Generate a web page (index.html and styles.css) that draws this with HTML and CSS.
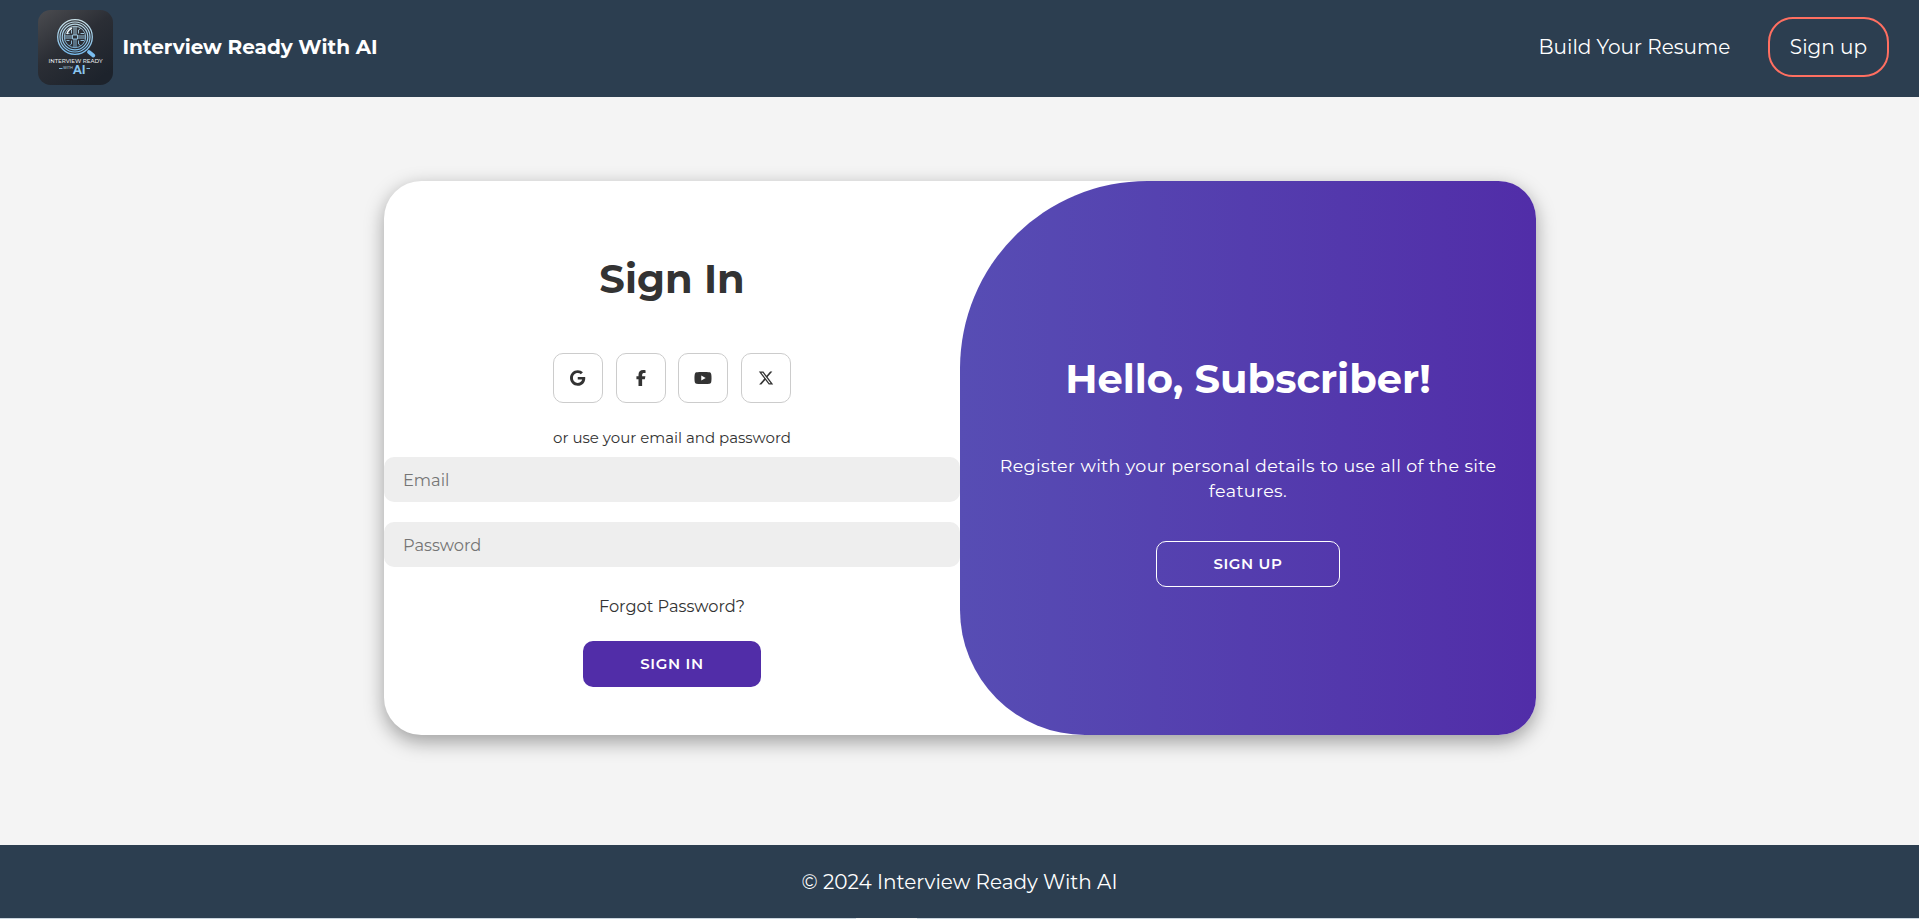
FILE: index.html
```html
<!DOCTYPE html>
<html lang="en">
<head>
<meta charset="utf-8">
<title>Interview Ready With AI</title>
<link rel="stylesheet" href="styles.css">
</head>
<body>
<header class="header">
  <div class="brand">
    <svg class="logo" viewBox="0 0 75 75" role="img" aria-label="Interview Ready With AI">
      <defs>
        <linearGradient id="tile" x1="0" y1="0" x2="0.7" y2="1"><stop offset="0" stop-color="#4b4c50"/><stop offset="0.5" stop-color="#2b2e35"/><stop offset="1" stop-color="#1d232c"/></linearGradient>
        <linearGradient id="ring" gradientUnits="userSpaceOnUse" x1="0" y1="9" x2="0" y2="45"><stop offset="0" stop-color="#c9e0e6"/><stop offset="1" stop-color="#74b8ea"/></linearGradient>
      </defs>
      <rect width="75" height="75" rx="12.500" fill="url(#tile)"/>
      <g fill="none" stroke="url(#ring)">
        <circle cx="37" cy="27" r="17.300" stroke-width="1.300"/>
        <circle cx="37" cy="27" r="15" stroke-width="1.200"/>
        <circle cx="37" cy="27" r="12.800" stroke-width="1.200"/>
        <circle cx="37" cy="27" r="10.700" stroke-width="0.900"/>
        <path stroke-width="0.900" d="M34.500 25h5v4h-5zM36 25V17M38 25V17M36 29V37M38 29V37M34.500 26H27M34.500 28H27M39.500 26H47M39.500 28H47M33.500 23.500V20l-2-1.500M40.500 23.500V20l2-1.500M33.500 30.500V34l-2 1.500M40.500 30.500V34l2 1.500M31.500 23.500h-3M42.500 23.500h3.500M31.500 30.500h-3M42.500 30.500h3.500"/>
      </g>
      <path d="M29 24a9 9 0 0 1 5-6" fill="none" stroke="#eef6f8" stroke-width="1.400"/>
      <path d="M51 42l4.300 3.500" stroke="#79bdf0" stroke-width="3.800" stroke-linecap="round"/>
      <g class="logo-text" text-anchor="middle">
        <text x="37.500" y="52.800" font-size="6.200" font-weight="500" fill="#e8ecee" textLength="54" lengthAdjust="spacingAndGlyphs">INTERVIEW READY</text>
        <text x="30" y="59.300" font-size="4" font-weight="500" fill="#b5ccd9" textLength="10" lengthAdjust="spacingAndGlyphs">WITH</text>
        <text x="41.200" y="63.700" font-size="12" font-weight="700" fill="#8ac5ee" textLength="12.500" lengthAdjust="spacingAndGlyphs">AI</text>
      </g>
      <path d="M21 58.500h3.500M48.500 58.500h3.500" stroke="#79b4dc" stroke-width="1.100"/>
    </svg>
    <span class="brand-name">Interview Ready With AI</span>
  </div>
  <nav class="nav">
    <a class="nav-link">Build Your Resume</a>
    <a class="nav-link nav-signup">Sign up</a>
  </nav>
</header>

<main class="main">
  <section class="card">
    <form class="form">
      <h1 class="title">Sign In</h1>
      <div class="social">
        <a class="social-icon"><svg width="15.250" height="16" viewBox="0 0 488 512"><path d="M488 261.800C488 403.300 391.100 504 248 504 110.800 504 0 393.200 0 256S110.800 8 248 8c66.800 0 123 24.500 166.300 64.900l-67.500 64.900C258.500 52.600 94.300 116.600 94.300 256c0 86.500 69.100 156.600 153.700 156.600 98.200 0 135-70.400 140.800-106.900H248v-85.300h236.100c2.300 12.700 3.900 24.900 3.900 41.400z"/></svg></a>
        <a class="social-icon"><svg width="10" height="16" viewBox="0 0 320 512"><path d="M80 299.300V512H196V299.300h86.500l18-97.800H196V166.900c0-51.700 20.300-71.500 72.700-71.500 16.300 0 29.400.4 37 1.200V7.900C291.400 4 256.400 0 236.200 0 129.300 0 80 50.500 80 159.400v42.100H14v97.800H80z"/></svg></a>
        <a class="social-icon"><svg width="18" height="16" viewBox="0 0 576 512"><path d="M549.700 124.100c-6.300-23.700-24.800-42.300-48.300-48.600C458.800 64 288 64 288 64S117.200 64 74.600 75.500c-23.500 6.300-42 24.900-48.300 48.600C14.900 167 14.900 256.400 14.900 256.400s0 89.400 11.400 132.300c6.300 23.700 24.800 41.500 48.300 47.800C117.200 448 288 448 288 448s170.800 0 213.400-11.500c23.500-6.300 42-24.200 48.300-47.800 11.400-42.900 11.400-132.300 11.400-132.300s0-89.400-11.400-132.300zM232.200 337.600V175.200l142.700 81.200z"/></svg></a>
        <a class="social-icon"><svg width="16" height="16" viewBox="0 0 512 512"><path d="M389.200 48h70.600L305.600 224.200 487 464H345L233.700 318.600 106.500 464H35.800L200.700 275.500 26.800 48H172.400L272.900 180.900 389.200 48zM364.400 421.800h39.100L151.100 88h-42z"/></svg></a>
      </div>
      <span class="hint">or use your email and password</span>
      <input class="field" type="email" placeholder="Email">
      <input class="field" type="password" placeholder="Password">
      <a class="forgot">Forgot Password?</a>
      <button class="btn btn-primary" type="button">Sign In</button>
    </form>
    <aside class="panel">
      <h1 class="title title-light">Hello, Subscriber!</h1>
      <p class="panel-text">Register with your personal details to use all of the site features.</p>
      <button class="btn btn-outline" type="button">Sign Up</button>
    </aside>
  </section>
</main>

<footer class="footer">© 2024 Interview Ready With AI</footer>
<div class="edge"></div>
</body>
</html>
```
FILE: styles.css
```css
* { box-sizing: border-box; margin: 0; padding: 0; }

body {
  display: flex;
  flex-direction: column;
  height: 919px;
  overflow: hidden;
  background: #f4f4f4;
  font-family: Montserrat, Inter, sans-serif;
  color: #333;
}

.header {
  display: flex;
  justify-content: space-between;
  align-items: flex-start;
  height: 97px;
  padding: 10px 30px 0 38px;
  background: #2c3e50;
  color: #fff;
}
.brand { display: flex; align-items: center; gap: 9.4px; height: 75px; }
.logo { width: 75px; height: 75px; }
.logo-text { font-family: Montserrat, Inter, sans-serif; }
.brand-name { padding-bottom: 2px; font-size: 20px; font-weight: 700; }
.nav { display: flex; align-items: center; gap: 37.5px; height: 74px; }
.nav-link { font-size: 20px; line-height: 24px; }
.nav-signup { padding: 16px 20px; border: 2px solid #ff6f61; border-radius: 25px; }

.main { flex: 1; padding-top: 84px; }
.card {
  display: flex;
  width: 1152px;
  height: 554px;
  margin: 0 auto 0 384px;
  overflow: hidden;
  background: #fff;
  border-radius: 37.5px;
  box-shadow: 0 6.25px 18.75px rgba(0, 0, 0, 0.35);
}

.form {
  display: flex;
  flex-direction: column;
  align-items: center;
  width: 50%;
  padding-top: 73px;
}
.title { font-size: 40px; font-weight: 700; line-height: 49px; }
.title-light { color: #fff; }
.social { display: flex; gap: 12.7px; margin-top: 50px; }
.social-icon {
  display: flex;
  justify-content: center;
  align-items: center;
  width: 50px;
  height: 50px;
  border: 1px solid #ccc;
  border-radius: 10px;
}
.social-icon svg { fill: #333; }
.hint { margin-top: 25px; font-size: 15px; line-height: 19px; }
.field {
  width: 100%;
  height: 45px;
  margin-top: 10px;
  padding: 0 19px;
  border: 0;
  border-radius: 10px;
  background: #eee;
  font: 400 16.25px Montserrat, Inter, sans-serif;
}
.field + .field { margin-top: 20px; }
.field::placeholder { color: #757575; }
.forgot { margin-top: 29px; font-size: 16.25px; line-height: 20px; }

.btn {
  height: 46px;
  padding-bottom: 1px;
  border: 1px solid transparent;
  border-radius: 10px;
  color: #fff;
  font: 600 15px Montserrat, Inter, sans-serif;
  letter-spacing: 0.625px;
  text-transform: uppercase;
}
.btn-primary { width: 178px; margin-top: 25px; background: #512da8; }
.btn-outline { width: 184px; margin-top: 38px; background: transparent; border-color: #fff; }

.panel {
  display: flex;
  flex-direction: column;
  align-items: center;
  width: 50%;
  padding: 173px 37.5px 0;
  border-radius: 187.5px 0 0 125px;
  background: linear-gradient(to right, #574db4, #512da8);
  color: #fff;
}
.panel-text {
  margin-top: 50px;
  font-size: 17.5px;
  line-height: 25px;
  letter-spacing: 0.375px;
  text-align: center;
}

.footer {
  height: 73px;
  padding-top: 1px;
  background: #2c3e50;
  color: #fff;
  font-size: 20px;
  line-height: 73px;
  text-align: center;
}
.edge {
  height: 1px;
  background: linear-gradient(to right, #cbd6df 856px, #f4f4f4 856px, #f4f4f4 917px, #cbd6df 917px);
}
```
